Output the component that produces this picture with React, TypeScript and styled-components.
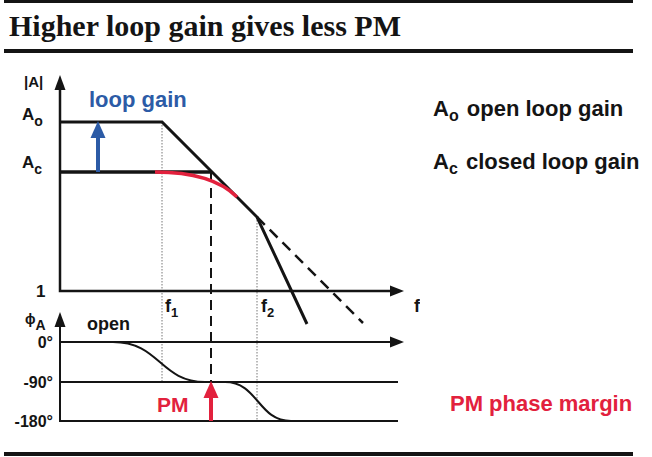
import styled, { createGlobalStyle } from "styled-components";

const GlobalStyle = createGlobalStyle`
  html, body {
    margin: 0;
    padding: 0;
    background: #fff;
  }
  body {
    font-family: "Liberation Sans", Arial, sans-serif;
    color: #111;
  }
`;

const BLUE = "#2c5ba6";
const RED = "#e2213d";
const INK = "#141414";

const Slide = styled.div`
  width: 652px;
  height: 457px;
  display: flex;
  flex-direction: column;
`;

const Rule = styled.div<{ $thick: number }>`
  height: ${(p) => p.$thick}px;
  margin: 0 19px 0 4px;
  background: ${INK};
  flex: none;
`;

const Title = styled.h1`
  margin: 0;
  height: 46px;
  padding-left: 9px;
  font: bold 30px/46px "Liberation Serif", "Times New Roman", serif;
  color: ${INK};
  white-space: nowrap;
`;

const Body = styled.div`
  display: flex;
  height: 399px;
  flex: none;
`;

const Chart = styled.svg`
  display: block;
  flex: none;
  width: 420px;
  height: 399px;
`;

const Label = styled.text<{ $size: number; $color?: string }>`
  font-family: "Liberation Sans", Arial, sans-serif;
  font-size: ${(p) => p.$size}px;
  font-weight: bold;
  fill: ${(p) => p.$color ?? INK};
`;

const Legend = styled.div`
  flex: 1;
  display: flex;
  flex-direction: column;
  padding: 41px 0 33px 13px;
`;

const LegendItem = styled.div<{ $color?: string; $indent?: number; $top?: string }>`
  font: bold 22px/30px "Liberation Sans", Arial, sans-serif;
  color: ${(p) => p.$color ?? INK};
  margin-left: ${(p) => p.$indent ?? 0}px;
  margin-top: ${(p) => p.$top ?? "0"};
  white-space: nowrap;
`;

const Sub = styled.span`
  font-size: 16px;
  line-height: 1;
  vertical-align: -5px;
  margin-right: 2px;
`;

// phase: 0 -> -90 around f1, -90 -> -180 around f2
const phasePath =
  "M60,342 L113,342 C160,342 160,382 205,382 L225,382 C258,382 258,421 291,421 L398,421";

function Bode() {
  return (
    <Chart viewBox="0 53 420 399">
      {/* guides */}
      <g stroke="#777" strokeWidth={1} strokeDasharray="1.5 1.5" fill="none">
        <line x1={162} y1={122} x2={162} y2={382} />
        <line x1={257} y1={217} x2={257} y2={421} />
      </g>
      <line x1={211} y1={172} x2={211} y2={382} stroke={INK} strokeWidth={2} strokeDasharray="10 6" />

      {/* magnitude axes */}
      <polyline points="60,88 60,291 392,291" stroke={INK} strokeWidth={2.5} fill="none" />
      <polygon points="60,75 54.5,90 65.5,90" fill={INK} />
      <polygon points="404,291 390,285.5 390,296.5" fill={INK} />

      {/* magnitude response */}
      <line x1={257} y1={217} x2={363} y2={323} stroke={INK} strokeWidth={2.5} strokeDasharray="11 7" />
      <g stroke={INK} strokeWidth={3} fill="none">
        <polyline points="60,122 162,122 257,217 307,324" />
        <line x1={60} y1={172} x2={212} y2={172} strokeWidth={3.5} />
      </g>
      <path d="M155,172 Q212,172 237,197" stroke={RED} strokeWidth={3.5} fill="none" />

      {/* loop gain arrow */}
      <line x1={98} y1={172} x2={98} y2={134} stroke={BLUE} strokeWidth={4} />
      <polygon points="98,121 90.5,138 105.5,138" fill={BLUE} />

      {/* phase axes */}
      <g stroke={INK} strokeWidth={2} fill="none">
        <polyline points="60,326 60,421 398,421" />
        <line x1={60} y1={342} x2={392} y2={342} />
        <line x1={60} y1={382} x2={398} y2={382} />
      </g>
      <polygon points="60,312 54.5,327 65.5,327" fill={INK} />
      <polygon points="404,342 390,336.5 390,347.5" fill={INK} />
      <path d={phasePath} stroke={INK} strokeWidth={2} fill="none" />

      {/* phase margin arrow */}
      <line x1={211} y1={421} x2={211} y2={394} stroke={RED} strokeWidth={4} />
      <polygon points="211,381 203.5,398 218.5,398" fill={RED} />

      {/* labels */}
      <Label $size={15} x={24} y={87}>|A|</Label>
      <Label $size={17} x={22} y={120}>
        A<tspan fontSize={14} dy={6}>o</tspan>
      </Label>
      <Label $size={17} x={22} y={168}>
        A<tspan fontSize={14} dy={6}>c</tspan>
      </Label>
      <Label $size={17} x={36} y={297}>1</Label>
      <Label $size={22} x={89} y={107} $color={BLUE}>loop gain</Label>

      <Label $size={18} x={165} y={312}>
        f<tspan fontSize={13} dy={5}>1</tspan>
      </Label>
      <Label $size={18} x={261} y={312}>
        f<tspan fontSize={13} dy={5}>2</tspan>
      </Label>
      <Label $size={18} x={414} y={312}>f</Label>

      <Label $size={14} x={25} y={324}>
        ϕ<tspan fontSize={14} dy={6}>A</tspan>
      </Label>
      <Label $size={18} x={87} y={330}>open</Label>
      <Label $size={16} x={53} y={348} textAnchor="end">0°</Label>
      <Label $size={16} x={53} y={388} textAnchor="end">-90°</Label>
      <Label $size={16} x={53} y={427} textAnchor="end">-180°</Label>
      <Label $size={21} x={157} y={412} $color={RED}>PM</Label>
    </Chart>
  );
}

export default function App() {
  return (
    <>
      <GlobalStyle />
      <Slide>
        <Rule $thick={3} />
        <Title>Higher loop gain gives less PM</Title>
        <Rule $thick={4} />
        <Body>
          <Bode />
          <Legend>
            <LegendItem>
              A<Sub>o</Sub> open loop gain
            </LegendItem>
            <LegendItem $top="23px">
              A<Sub>c</Sub> closed loop gain
            </LegendItem>
            <LegendItem $color={RED} $indent={17} $top="auto">
              PM phase margin
            </LegendItem>
          </Legend>
        </Body>
        <Rule $thick={4} />
      </Slide>
    </>
  );
}
